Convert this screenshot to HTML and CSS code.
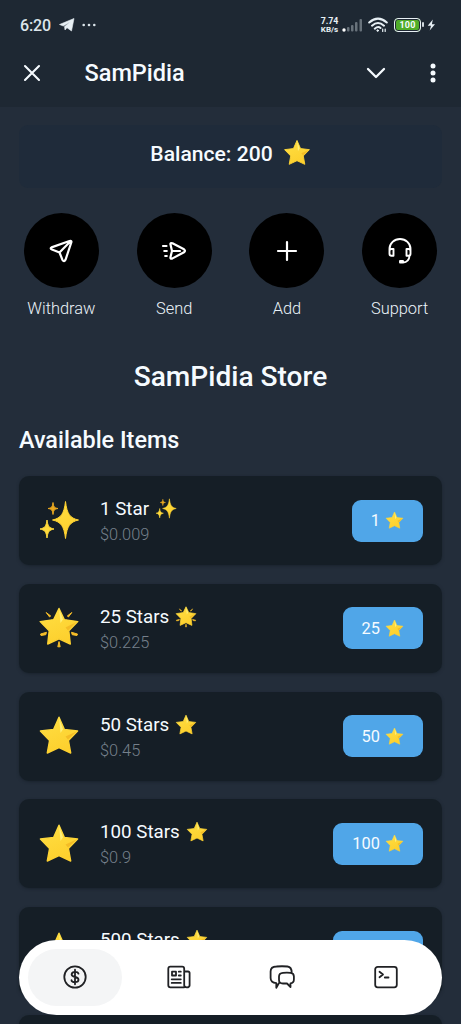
FILE: index.html
```
<!DOCTYPE html>
<html lang="en">
<head>
<meta charset="utf-8">
<title>SamPidia</title>
<link rel="stylesheet" href="styles.css">
</head>
<body>
<svg class="defs" aria-hidden="true">
  <defs>
    <linearGradient id="gold" x1="0" y1="0" x2="0.4" y2="1"><stop offset="0" stop-color="#ffdf43"/><stop offset="1" stop-color="#fdd02e"/></linearGradient>
    <symbol id="star" viewBox="-1 0 42 42">
      <path d="M20 2.200 25.300 14.400 38.600 16 29.400 25.400 31.700 38 20 32.500 8.300 38 10.600 25.400 1.400 16 14.700 14.400Z" fill="url(#gold)" stroke="url(#gold)" stroke-width="1.400" stroke-linejoin="round"/>
      <path d="M20.200 3.500 24 14.200 21.500 18Z" fill="#fff07a"/>
      <path d="M37.500 16.600 26.500 21.500 29 24.600Z" fill="#f4bc26"/>
    </symbol>
    <symbol id="sparkles" viewBox="-1 0 42 42">
      <path d="M26.500 1.500C28 14 31 18.200 39.500 20C31 22 28 26 26.500 38.500C25 26 22 22 13.500 20C22 18 25 14 26.500 1.500Z" fill="url(#gold)" stroke="#fdd131"/>
      <path d="M8 20C8.800 26 10 28 15 29C10 30 8.800 32 8 38C7.200 32 6 30 1 29C6 28 7.200 26 8 20Z" fill="#ffda3b" stroke="#ffda3b"/>
      <path d="M14 2.500C14.500 7 15.500 8 19 8.500C15.500 9 14.500 10 14 14.500C13.500 10 12.500 9 9 8.500C12.500 8 13.500 7 14 2.500Z" fill="#e9a820" stroke="#e9a820"/>
    </symbol>
    <symbol id="glow" viewBox="-1 0 42 42">
      <path d="M20 1.500 25.300 12.600 38.800 14.600 29.800 23.800 31.300 37 20 31.800 8.700 37 10.200 23.800 1.200 14.600 14.700 12.600Z" fill="url(#gold)" stroke="url(#gold)" stroke-width="1.400" stroke-linejoin="round"/>
      <path d="M20.200 2.500 24 12.500 21.500 16Z" fill="#fff07a"/>
      <path d="M37.500 15 26.500 20.500 29 23.500Z" fill="#f4bc26"/>
      <path d="M7.200 5.500 10.500 9.900 11.700 9ZM32.800 5.500 29.500 9.900 28.300 9ZM1.500 27 7.500 25.300 6.800 27.700 2 28.500ZM38.500 27 32.500 25.300 33.200 27.700 38 28.500ZM20 34.500 18.800 39.800H21.200Z" fill="#f6bd28" stroke="#f6bd28" stroke-linejoin="round"/>
    </symbol>
  </defs>
</svg>
<div class="screen">
  <header class="top">
    <div class="status">
      <span class="clock">6:20</span>
      <svg class="plane" viewBox="0 0 16 14"><path d="M.5 6.500 15 .5 12.500 13 8 9.700 6 12 5.500 8.600 11.500 3.800 4.300 8Z" fill="#e8f0f5" stroke="#e8f0f5" stroke-width=".6"/></svg>
      <svg class="dots" viewBox="0 0 14 4"><g fill="#dce5eb"><circle cx="1.700" cy="2" r="1.300"/><circle cx="7" cy="2" r="1.300"/><circle cx="12.300" cy="2" r="1.300"/></g></svg>
      <span class="speed"><span>7.74</span><br>KB/s</span>
      <svg class="signal" viewBox="0 0 22 16"><circle cx="2" cy="13" r="1.700" fill="#fff"/><g fill="#68727b"><rect x="5" y="10" width="2.500" height="4.500" rx="1"/><rect x="9" y="8" width="2.500" height="6.500" rx="1"/><rect x="13" y="5" width="2.500" height="9.500" rx="1"/><rect x="17.500" y="2" width="2.500" height="12.500" rx="1"/></g></svg>
      <svg class="wifi" viewBox="0 0 20 16" fill="none" stroke="#e8f0f5" stroke-width="2" stroke-linecap="round"><path d="M1.200 5.500Q10-2.200 18.800 5.500M4 8.700Q10 3.300 16 8.700M6.800 11.700Q10 8.800 12.500 11"/><circle cx="9.700" cy="13.600" r=".8" fill="#e8f0f5" stroke-width="1"/><path d="M14.700 12V14.500M17.200 12V14.500" stroke-width="1.200"/></svg>
      <span class="battery">100</span><span class="battery-tip"></span>
      <svg class="bolt" viewBox="0 0 9 12"><path d="M5.800.5.7 6.800H4L2.700 11.500 8 5.200H4.900Z" fill="#e8f0f5"/></svg>
    </div>
    <div class="bar">
      <svg class="close" viewBox="0 0 18 18"><path d="M2 2 16 16M16 2 2 16" fill="none" stroke="#f6fbff" stroke-width="2.100" stroke-linecap="round"/></svg>
      <h1>SamPidia</h1>
      <svg class="chevron" viewBox="0 0 20 12"><path d="M2 2 10 10 18 2" fill="none" stroke="#f6fbff" stroke-width="2.300" stroke-linecap="round" stroke-linejoin="round"/></svg>
      <svg class="more" viewBox="0 0 6 20"><g fill="#f6fbff"><circle cx="3" cy="3" r="2.500"/><circle cx="3" cy="10" r="2.500"/><circle cx="3" cy="17" r="2.500"/></g></svg>
    </div>
  </header>
  <main>
    <section class="balance"><span>Balance: 200</span><svg><use href="#star"/></svg></section>
    <section class="actions">
      <div class="action"><span class="disc"><svg viewBox="0 0 26 26"><path d="M3.500 9.400 21.500 3Q24 2.200 23.300 4.500L17.500 21.800Q16 24.500 14.500 22L11.500 14.500 4 11.500Q1.800 10.300 3.500 9.400ZM11.500 14.500 22.500 3.300"/></svg></span><span>Withdraw</span></div>
      <div class="action"><span class="disc"><svg viewBox="0 0 26 26"><path d="M9.500 6.500Q9 4.300 11.500 5.300L23 11.300Q25 12.900 23 14.300L11.500 20.400Q9 21.300 9.500 19L11 13ZM11 13H19M2 8H5.500M3.300 13H5.800M4.200 18H5.800"/></svg></span><span>Send</span></div>
      <div class="action"><span class="disc"><svg viewBox="0 0 26 26"><path d="M13 4V22M4 13H22"/></svg></span><span>Add</span></div>
      <div class="action"><span class="disc"><svg class="headset" viewBox="0 0 26 26"><path d="M2.500 14V11A10.500 10 0 0 1 23.500 11V14M6.500 11V17.800H4.500Q2.500 17.800 2.500 15.800V13Q2.500 11 4.500 11ZM19.500 11V17.800H21.500Q23.500 17.800 23.500 15.800V13Q23.500 11 21.500 11ZM22.500 17.500V18Q22 24.200 16 24.500H13V23H16"/></svg></span><span>Support</span></div>
    </section>
    <h2>SamPidia Store</h2>
    <h3>Available Items</h3>
    <section class="items">
      <article><svg class="pic"><use href="#sparkles"/></svg><div class="info"><p class="name">1 Star <svg><use href="#sparkles"/></svg></p><p class="price">$0.009</p></div><button>1 <svg><use href="#star"/></svg></button></article>
      <article><svg class="pic"><use href="#glow"/></svg><div class="info"><p class="name">25 Stars <svg><use href="#glow"/></svg></p><p class="price">$0.225</p></div><button>25 <svg><use href="#star"/></svg></button></article>
      <article><svg class="pic"><use href="#star"/></svg><div class="info"><p class="name">50 Stars <svg><use href="#star"/></svg></p><p class="price">$0.45</p></div><button>50 <svg><use href="#star"/></svg></button></article>
      <article><svg class="pic"><use href="#star"/></svg><div class="info"><p class="name">100 Stars <svg><use href="#star"/></svg></p><p class="price">$0.9</p></div><button>100 <svg><use href="#star"/></svg></button></article>
      <article><svg class="pic"><use href="#star"/></svg><div class="info"><p class="name">500 Stars <svg><use href="#star"/></svg></p><p class="price">$4.5</p></div><button>500 <svg><use href="#star"/></svg></button></article>
      <article></article>
    </section>
  </main>
  <nav>
    <a class="active"><svg viewBox="0 0 26 26"><circle cx="13" cy="13" r="10.700"/><path d="M16.500 9.700Q16 7.900 13 7.900T9.600 10.300Q9.600 12.300 13 13T16.500 15.700Q16.500 18.100 13 18.100T9.500 16.200M13 5.700V20.300"/></svg></a>
    <a><svg viewBox="0 0 26 26"><path d="M18.200 23.300H4.300Q2.300 23.300 2.300 21.300V4.700Q2.300 2.700 4.300 2.700H16.200Q18.200 2.700 18.200 4.700V21.300Q18.200 23.300 20.800 23.300T23.600 21.300V9Q23.600 7.500 22 7.500H18.200M6 7.700H10V11.500H6ZM12.800 7.700H14.800M12.800 11.500H14.800M5.700 15.300H14.800M5.700 18.900H14.800"/></svg></a>
    <a><svg viewBox="0 0 26 26"><path d="M10 19.200H9.800L7.300 23.700V19.200Q1.600 18.700 1.600 14V7.500Q1.600 2.700 7.500 2.500Q13 2 18.500 2.500Q22.700 3 22.700 8.700M14 8.900Q18 8.500 21.500 8.900 24.900 9.300 24.900 12.500V15.500Q24.900 19 21.500 19.300V23L18 19.500H14Q10 19.500 10 16V12.500Q10 9.300 14 8.900Z"/></svg></a>
    <a><svg viewBox="0 0 26 26"><rect x="2.200" y="2.800" width="21.600" height="20.500" rx="2.500"/><path d="M6.500 7.800 10 10.500 6.500 13.200M11.800 13.500H15.500"/></svg></a>
  </nav>
</div>
</body>
</html>
```
FILE: styles.css
```
* { box-sizing: border-box; margin: 0; padding: 0; }
body { background: #232d3a; color: #f6fbff; font-family: Roboto, sans-serif; }
svg { display: block; flex: none; }
.defs { position: absolute; width: 0; height: 0; }
.screen { position: relative; width: 461px; height: 1024px; overflow: hidden; background: #232d3a; }
.top { height: 107px; background: #1e2833; }
.status { display: flex; align-items: center; height: 49px; padding: 0 25px 0 20px; }
.clock { width: 31px; font-size: 16px; font-weight: 500; letter-spacing: -.1px; color: #dce5eb; padding-top: 2px; }
.plane { width: 16px; height: 14px; margin-left: 8px; }
.dots { width: 14px; height: 4px; margin-left: 7px; }
.speed { margin-left: auto; font-size: 8px; line-height: 8px; font-weight: 700; text-align: center; width: 19px; white-space: nowrap; color: #e8f0f5; padding-top: 2px; }
.speed span { font-size: 8.800px; }
.signal { width: 22px; height: 16px; margin-left: 3px; }
.wifi { width: 20px; height: 16px; margin-left: 4px; }
.battery { width: 27px; height: 14px; margin-left: 6px; border: 1.500px solid #e8f0f5; border-radius: 4px; background: #50ad29; box-shadow: inset 0 0 0 1px #1f2834; font-size: 9px; line-height: 12px; font-weight: 700; text-align: center; letter-spacing: .2px; }
.battery-tip { width: 2px; height: 5px; margin-left: 1px; border-radius: 1px; background: #d0d8de; }
.bolt { width: 9px; height: 12px; margin-left: 3px; }
.bar { display: flex; align-items: center; height: 48px; padding: 0 25px 0 23px; }
.close { width: 18px; height: 18px; }
.bar h1 { margin-left: 43.500px; font-size: 23.500px; line-height: 28px; font-weight: 500; }
.chevron { width: 20px; height: 12px; margin-left: auto; }
.more { width: 6px; height: 20px; margin-left: 44px; }
main { padding: 18px 19px 0; }
.balance { display: flex; align-items: center; justify-content: center; gap: 10px; height: 63px; padding-bottom: 7px; border-radius: 9px; background: #1f2b3a; font-size: 21.100px; font-weight: 500; }
.balance svg { width: 28px; height: 28px; }
.actions { display: flex; justify-content: space-between; margin: 25px -14px 0; }
.action { display: flex; flex-direction: column; align-items: center; width: 113px; font-size: 16.400px; line-height: 20px; font-weight: 300; color: #eaf2f8; }
.disc { display: flex; align-items: center; justify-content: center; width: 75px; height: 75px; margin-bottom: 11px; border-radius: 50%; background: #000; }
.disc svg { width: 26px; height: 26px; fill: none; stroke: #fff; stroke-width: 2.200; stroke-linecap: round; stroke-linejoin: round; }
.disc .headset { stroke-width: 1.900; }
h2 { margin-top: 41px; font-size: 28.100px; line-height: 33px; font-weight: 500; text-align: center; }
h3 { margin-top: 33px; font-size: 23.400px; line-height: 28px; font-weight: 500; }
.items { display: flex; flex-direction: column; gap: 18.700px; margin-top: 22px; }
article { display: flex; align-items: center; height: 89.100px; padding: 0 19px; border-radius: 10px; background: #151e26; box-shadow: 0 1px 3px #1a232d; }
.pic { width: 42px; height: 42px; margin-right: 20px; }
.info { flex: 1; padding-top: 2px; }
.name { display: flex; align-items: center; gap: 6px; font-size: 18.750px; line-height: 26px; }
.name svg { width: 22px; height: 22px; }
.price { font-size: 16.400px; line-height: 25px; font-weight: 300; color: #75808b; }
button { display: flex; align-items: center; gap: 5px; height: 42px; padding: 0 19px; border: 0; border-radius: 9px; background: #50a6e8; color: #f6fbff; font: 400 16.400px Roboto, sans-serif; }
button svg { width: 19px; height: 19px; }
nav { position: absolute; left: 19px; right: 19px; bottom: 9.500px; display: flex; justify-content: space-between; align-items: center; height: 75px; padding: 0 9px; border-radius: 38px; background: #fff; }
nav a { display: flex; align-items: center; justify-content: center; width: 94px; height: 57px; border-radius: 29px; }
nav .active { background: #f4f5f6; }
nav svg { width: 26px; height: 26px; fill: none; stroke: #202124; stroke-width: 1.800; stroke-linecap: round; stroke-linejoin: round; }
```
